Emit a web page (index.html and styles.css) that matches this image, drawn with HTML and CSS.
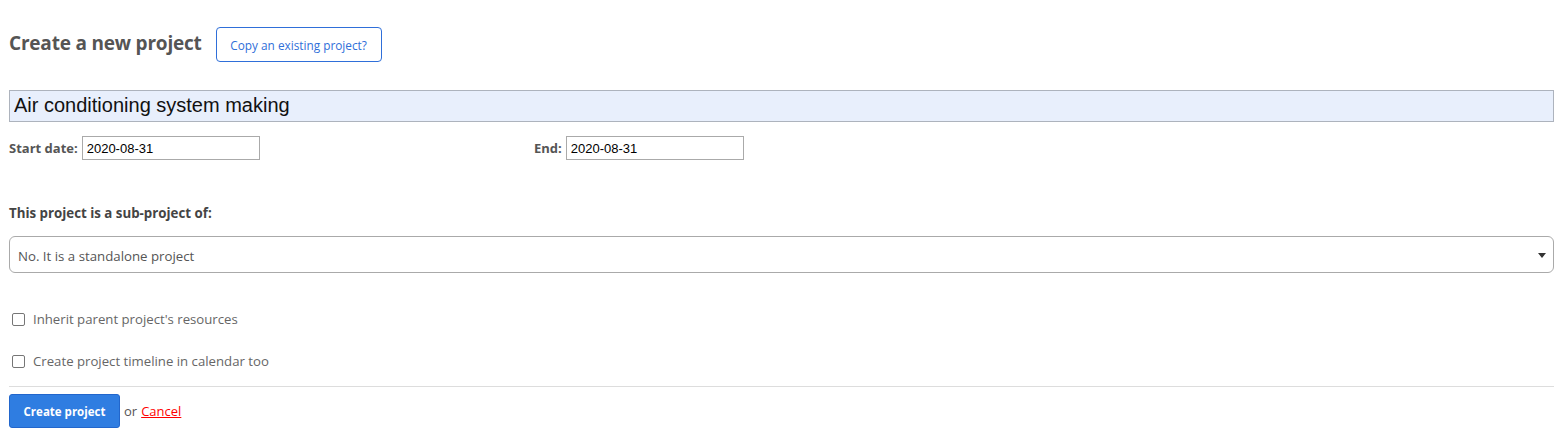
FILE: index.html
```html
<!DOCTYPE html>
<html>
<head>
<meta charset="utf-8">
<link rel="stylesheet" href="styles.css">
</head>
<body>
<div class="page">
  <div class="head">
    <h1 class="title">Create a new project</h1>
    <button class="copy-btn">Copy an existing project?</button>
  </div>
  <input class="name-input" type="text" value="Air conditioning system making">
  <div class="dates">
    <div class="date-field start">
      <span class="lbl">Start date:</span>
      <input class="date-input" type="text" value="2020-08-31">
    </div>
    <div class="date-field end">
      <span class="lbl">End:</span>
      <input class="date-input" type="text" value="2020-08-31">
    </div>
  </div>
  <div class="sub-label">This project is a sub-project of:</div>
  <div class="select">
    <span>No. It is a standalone project</span>
    <svg class="caret" width="8" height="5" viewBox="0 0 8 5"><path d="M0 0h8L4 5z" fill="#333"/></svg>
  </div>
  <label class="check first"><span class="box"></span>Inherit parent project's resources</label>
  <label class="check"><span class="box"></span>Create project timeline in calendar too</label>
  <hr class="sep">
  <div class="actions">
    <button class="create-btn">Create project</button>
    <span class="or">or</span>
    <a class="cancel" href="#">Cancel</a>
  </div>
</div>
</body>
</html>
```
FILE: styles.css
```css
html, body {
  margin: 0;
  padding: 0;
  background: #fff;
}
body {
  font-family: "Open Sans", "Noto Sans", sans-serif;
  color: #555;
}
.page {
  padding: 27px 12px 0 9px;
}
.head {
  display: flex;
  align-items: center;
  gap: 14px;
  height: 35px;
}
.title {
  margin: 0 0 3px 0;
  font-size: 19px;
  font-weight: 700;
  color: #555;
  letter-spacing: -0.2px;
}
.copy-btn {
  height: 35px;
  width: 166px;
  border: 1px solid #2f6fd9;
  border-radius: 4px;
  background: #fff;
  color: #2f6fd9;
  font-family: "Open Sans", sans-serif;
  font-size: 11.8px;
  padding: 0;
}
.name-input {
  display: block;
  box-sizing: border-box;
  width: 100%;
  height: 32px;
  margin-top: 28px;
  border: 1px solid #adb3bd;
  background: #e8effc;
  font-family: "Liberation Sans", Arial, sans-serif;
  font-size: 20px;
  color: #111;
  padding: 0 4px 2px;
}
.dates {
  display: flex;
  margin-top: 14px;
  height: 24px;
}
.date-field {
  display: flex;
  align-items: center;
  gap: 4px;
}
.date-field.start {
  width: 525px;
}
.lbl {
  font-size: 13px;
  font-weight: 700;
  color: #555;
}
.date-input {
  box-sizing: border-box;
  width: 178px;
  height: 24px;
  border: 1px solid #aaa;
  font-family: "Liberation Sans", Arial, sans-serif;
  font-size: 13px;
  color: #000;
  padding: 0 4px;
}
.sub-label {
  margin-top: 44px;
  font-size: 13.3px;
  font-weight: 700;
  color: #444;
}
.select {
  box-sizing: border-box;
  display: flex;
  align-items: center;
  justify-content: space-between;
  height: 37px;
  margin-top: 14px;
  border: 1px solid #aaa;
  border-radius: 6px;
  padding: 2px 7px 0 8px;
  font-size: 13.25px;
  color: #555;
}
.check {
  display: flex;
  align-items: center;
  gap: 8px;
  font-size: 13.2px;
  color: #666;
  height: 18px;
}
.check.first {
  margin-top: 37px;
}
.check + .check {
  margin-top: 24px;
}
.box {
  box-sizing: border-box;
  width: 13px;
  height: 13px;
  border: 1px solid #767676;
  border-radius: 2px;
  margin-left: 3px;
}
.sep {
  margin: 16px 0 0 0;
  border: 0;
  border-top: 1px solid #ddd;
}
.actions {
  display: flex;
  align-items: center;
  margin-top: 7px;
  gap: 4px;
}
.create-btn {
  width: 111px;
  height: 34px;
  border: 1px solid #2266cc;
  border-radius: 3px;
  background: #2f7de1;
  color: #fff;
  font-family: "Open Sans", sans-serif;
  font-size: 11.5px;
  font-weight: 700;
  padding: 0;
}
.or {
  font-size: 13px;
  color: #555;
}
.cancel {
  font-size: 13px;
  color: #f00;
}
```
